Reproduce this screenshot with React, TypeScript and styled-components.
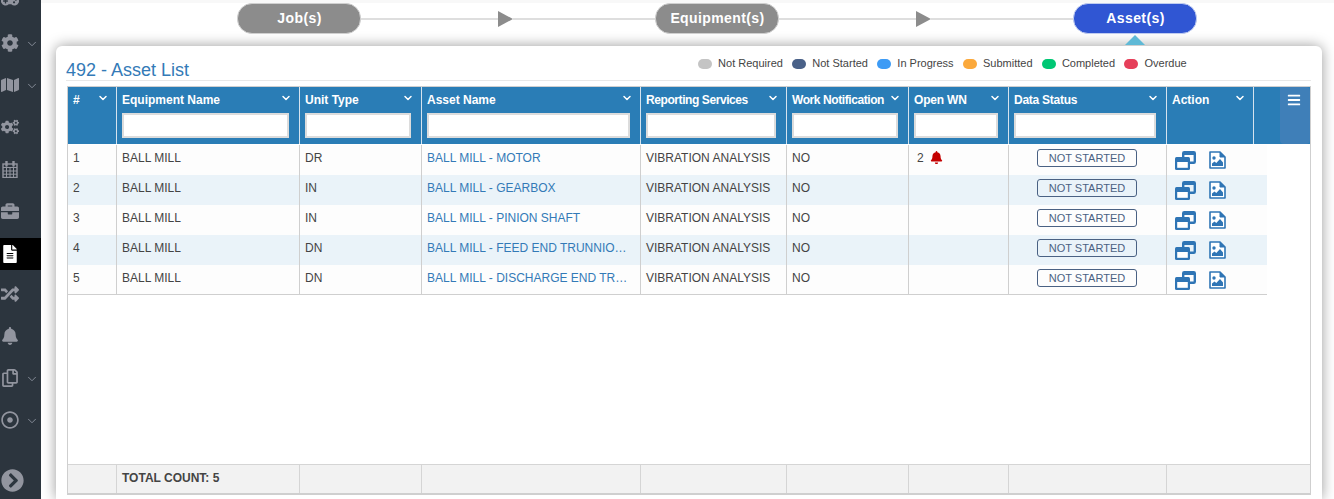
import React from 'react';
import styled, { createGlobalStyle } from 'styled-components';
import { ChevronDown } from 'lucide-react';
import {
  FaGamepad, FaCog, FaMap, FaCogs, FaBriefcase, FaFileAlt, FaRandom, FaBell,
  FaRegCopy, FaRegDotCircle, FaChevronCircleRight, FaBars,
} from 'react-icons/fa';

const Global = createGlobalStyle`
  html, body { margin: 0; padding: 0; height: 100%; overflow: hidden; background: #fff; }
  body { font-family: "Liberation Sans", Arial, sans-serif; color: #333; }
  * { box-sizing: border-box; }
`;

const COLS = '49px 183px 122px 219px 146px 122px 100px 158px';

const Page = styled.div`
  display: flex;
  width: 1334px;
  height: 499px;
  overflow: hidden;
`;

const Sidebar = styled.nav`
  width: 41px;
  flex: none;
  height: 499px;
  background: #2c353e;
  display: flex;
  flex-direction: column;
  overflow: hidden;
  color: #92959f;
`;

const NavItem = styled.div<{ $active?: boolean; $first?: boolean }>`
  flex: none;
  height: ${p => (p.$active ? 32 : 42)}px;
  margin: ${p => (p.$active ? '6px 0 3px' : p.$first ? '-20px 0 0' : '0')};
  background: ${p => (p.$active ? '#000' : 'transparent')};
  color: ${p => (p.$active ? '#fff' : 'inherit')};
  display: flex;
  align-items: center;
  padding-left: 1px;
  font-size: 18px;
`;

const NavIcon = styled.span`
  width: 18px;
  height: 18px;
  display: flex;
  align-items: center;
  justify-content: center;
`;

const NavCaret = styled(ChevronDown)`
  margin-left: 6px;
  margin-top: 2px;
  color: #8a909c;
`;

const NavFoot = styled.div`
  margin-top: auto;
  height: 30px;
  padding-left: 1px;
  font-size: 23px;
  color: #92959f;
  display: flex;
  align-items: flex-start;
`;

const Main = styled.main`
  flex: 1;
  min-width: 0;
  display: flex;
  flex-direction: column;
  background: #fff;
`;

const Stepper = styled.div`
  flex: none;
  height: 46px;
  padding: 0 0 0 196px;
  border-top: 3px solid #f8f8f8;
  display: flex;
  align-items: flex-start;
`;

const Pill = styled.div<{ $on?: boolean }>`
  position: relative;
  width: 124px;
  height: 31px;
  flex: none;
  border-radius: 15px;
  border: 1px solid ${p => (p.$on ? '#c0ccf0' : '#cfcfcf')};
  background: ${p => (p.$on ? '#3056d3' : '#8c8c8c')};
  color: #fff;
  font-size: 14px;
  font-weight: 700;
  letter-spacing: 0.4px;
  padding: 0 0 1px 1px;
  display: flex;
  align-items: center;
  justify-content: center;
`;

const Notch = styled.span`
  position: absolute;
  left: 50%;
  top: 31px;
  margin-left: -10px;
  width: 0;
  height: 0;
  border-left: 10px solid transparent;
  border-right: 10px solid transparent;
  border-bottom: 10px solid #5fb9d6;
`;

const Connector = styled.div`
  width: 294px;
  height: 31px;
  flex: none;
  display: flex;
  align-items: center;
`;

const Line = styled.span<{ $w: number }>`
  width: ${p => p.$w}px;
  height: 2px;
  background: #dedede;
  flex: none;
`;

const Arrow = styled.span`
  flex: none;
  width: 0;
  height: 0;
  border-top: 8px solid transparent;
  border-bottom: 8px solid transparent;
  border-left: 15px solid #8c8c8c;
`;

const Card = styled.section`
  width: 1266px;
  margin-left: 15px;
  flex: 1;
  background: #fff;
  border-radius: 6px 6px 0 0;
  box-shadow: 0 0 14px rgba(0, 0, 0, 0.4);
  padding: 0 11px 0 10px;
  display: flex;
  flex-direction: column;
  min-height: 0;
`;

const CardHead = styled.header`
  flex: none;
  height: 35px;
  border-bottom: 1px solid #e8e8e8;
  display: flex;
  align-items: flex-start;
  margin-bottom: 5px;
`;

const Title = styled.h2`
  margin: 14px 0 0;
  font-size: 18px;
  line-height: 20px;
  font-weight: 400;
  color: #337ab7;
  white-space: nowrap;
`;

const Legend = styled.div`
  margin: 11px 0 0 509px;
  display: flex;
  gap: 9.4px;
`;

const LegendItem = styled.span`
  display: flex;
  align-items: center;
  gap: 6px;
  font-size: 11px;
  line-height: 13px;
  color: #444;
`;

const Dot = styled.i<{ $c: string }>`
  width: 14px;
  height: 10px;
  border-radius: 5px;
  background: ${p => p.$c};
`;

const Table = styled.div`
  width: 1244px;
  margin-left: 1px;
  flex: none;
  height: 409px;
  border: 1px solid #cfcfcf;
  border-bottom: 2px solid #cfcfcf;
  display: flex;
  flex-direction: column;
`;

const HeadRow = styled.div`
  flex: none;
  height: 57px;
  background: #2a7db6;
  display: grid;
  grid-template-columns: ${COLS} 87px 1fr 30px;
`;

const HeadCell = styled.div`
  position: relative;
  border-right: 1px solid #d5e3ee;
  padding: 6px 5px 0 5px;
  color: #fff;
  font-size: 12px;
  font-weight: 700;
  line-height: 14px;
`;

const HeadLabel = styled.span<{ $track: number }>`
  letter-spacing: ${p => p.$track}px;
  white-space: nowrap;
`;

const Sort = styled(ChevronDown)`
  position: absolute;
  right: 7px;
  top: 5px;
  color: #fff;
`;

const Filter = styled.input`
  display: block;
  width: calc(100% - 5px);
  height: 25px;
  margin-top: 6px;
  background: #fff;
  border: 2px solid #dcdcdc;
  outline: none;
`;

const Spacer = styled.div``;

const MenuCell = styled.div`
  background: #3f7fb8;
  border-radius: 0 4px 4px 4px;
  color: #fff;
  display: flex;
  justify-content: center;
  padding: 6px 2px 0 0;
  font-size: 14px;
`;

const Body = styled.div`
  flex: 1;
  min-height: 0;
  padding-top: 1px;
  background: #fff;
`;

const Rows = styled.div`
  width: 1199px;
  height: 150px;
  overflow: hidden;
  border-bottom: 1px solid #cfcfcf;
`;

const Row = styled.div<{ $alt?: boolean }>`
  display: grid;
  grid-template-columns: ${COLS} 1fr;
  height: 30px;
  background: ${p => (p.$alt ? '#eaf3f9' : '#fdfdfd')};
`;

const Cell = styled.div<{ $center?: boolean; $inset?: number }>`
  border-right: 1px solid #cfcfcf;
  padding: 0 5px 0 ${p => p.$inset ?? 5}px;
  font-size: 12px;
  color: #444;
  line-height: 26px;
  white-space: nowrap;
  overflow: hidden;
  text-overflow: ellipsis;
  ${p => p.$center && 'display:flex;justify-content:center;align-items:flex-start;padding:4px 6px 0 5px;'}
`;

const AssetLink = styled(Cell).attrs({ as: 'a' })`
  color: #337ab7;
  text-decoration: none;
  display: block;
`;

const Alert = styled(FaBell)`
  color: #c40000;
  font-size: 13px;
  margin-left: 6px;
  vertical-align: -2px;
`;

const Status = styled.span`
  width: 100px;
  height: 18px;
  border: 1px solid #4a6183;
  border-radius: 3px;
  color: #4a6183;
  font-size: 11px;
  line-height: 16px;
  text-align: center;
`;

const Actions = styled.div`
  display: flex;
  align-items: flex-start;
  padding: 6px 0 0 8px;
  gap: 13px;
  color: #2f75b5;
`;

const Foot = styled.div`
  flex: none;
  height: 29px;
  background: #f2f2f2;
  border-top: 1px solid #d5d5d5;
  display: grid;
  grid-template-columns: ${COLS} 1fr;
`;

const FootCell = styled.div`
  border-right: 1px solid #d5d5d5;
  padding: 0 5px;
  font-size: 12px;
  font-weight: 700;
  color: #444;
  line-height: 27px;
  &:last-child { border-right: 0; }
`;

const CloneIcon = () => (
  <svg width="21" height="19" viewBox="0 0 21 19" fill="none">
    <rect x="8.2" y="1.2" width="11.6" height="10.6" rx="1" stroke="currentColor" strokeWidth="2.4" />
    <path d="M8 3h12" stroke="currentColor" strokeWidth="2" />
    <rect x="0" y="6" width="15" height="13" rx="1.5" fill="currentColor" />
    <rect x="2.2" y="11" width="10.6" height="5.8" fill="#fff" />
  </svg>
);

const PictureIcon = () => (
  <svg width="17" height="18" viewBox="0 0 17 18" fill="none">
    <path d="M1 1h10l5 5v11H1z" stroke="currentColor" strokeWidth="1.6" strokeLinejoin="round" fill="#fff" />
    <path d="M11 1v5h5" fill="currentColor" stroke="currentColor" strokeWidth="1" />
    <circle cx="5" cy="7" r="1.7" fill="currentColor" />
    <path d="M3 15v-2.5l2.5-2 1.8 1.5L11 8l3 3.5V15z" fill="currentColor" />
  </svg>
);

const CalendarIcon = () => (
  <svg width="16" height="17" viewBox="0 0 16 17" fill="none" stroke="currentColor" strokeWidth="1">
    <rect x="1" y="3" width="14" height="13.5" strokeWidth="1.4" />
    <path d="M1 6.5h14M1 10h14M1 13.2h14M4.5 6v10M8 6v10M11.5 6v10" />
    <path d="M4.5 0.5v4M11.5 0.5v4" strokeWidth="2.4" strokeLinecap="round" />
  </svg>
);

const headers: [string, number][] = [
  ['#', 0], ['Equipment Name', 0], ['Unit Type', 0], ['Asset Name', 0],
  ['Reporting Services', -0.42], ['Work Notification', -0.42], ['Open WN', -0.2], ['Data Status', -0.25],
];
const legend: [string, string][] = [
  ['Not Required', '#c4c4c4'], ['Not Started', '#4a6188'], ['In Progress', '#3d9bf5'],
  ['Submitted', '#fba93c'], ['Completed', '#00c774'], ['Overdue', '#e63f5a'],
];
const rows = [
  ['DR', 'BALL MILL - MOTOR'],
  ['IN', 'BALL MILL - GEARBOX'],
  ['IN', 'BALL MILL - PINION SHAFT'],
  ['DN', 'BALL MILL - FEED END TRUNNION BEARING'],
  ['DN', 'BALL MILL - DISCHARGE END TRUNNION BEARING'],
];
const nav: [React.ReactNode, boolean][] = [
  [<FaGamepad key="a" />, false], [<FaCog key="b" />, true], [<FaMap key="c" />, true],
  [<FaCogs key="d" />, false], [<CalendarIcon key="e" />, false], [<FaBriefcase key="f" />, false],
];
const navAfter: [React.ReactNode, boolean][] = [
  [<FaRandom key="g" />, false], [<FaBell key="h" />, false], [<FaRegCopy key="i" />, true], [<FaRegDotCircle key="j" />, true],
];

const NavEntry = ({ icon, caret, first }: { icon: React.ReactNode; caret: boolean; first?: boolean }) => (
  <NavItem $first={first}>
    <NavIcon>{icon}</NavIcon>
    {caret && <NavCaret size={14} strokeWidth={1.6} />}
  </NavItem>
);

export default function App() {
  return (
    <Page>
      <Global />
      <Sidebar>
        {nav.map(([icon, caret], i) => <NavEntry key={i} icon={icon} caret={caret} first={i === 0} />)}
        <NavItem $active><NavIcon><FaFileAlt /></NavIcon></NavItem>
        {navAfter.map(([icon, caret], i) => <NavEntry key={i} icon={icon} caret={caret} />)}
        <NavFoot><FaChevronCircleRight /></NavFoot>
      </Sidebar>
      <Main>
        <Stepper>
          <Pill>Job(s)</Pill>
          <Connector><Line $w={137} /><Arrow /><Line $w={142} /></Connector>
          <Pill>Equipment(s)</Pill>
          <Connector><Line $w={137} /><Arrow /><Line $w={142} /></Connector>
          <Pill $on>Asset(s)<Notch /></Pill>
        </Stepper>
        <Card>
          <CardHead>
            <Title>492 - Asset List</Title>
            <Legend>
              {legend.map(([t, c]) => <LegendItem key={t}><Dot $c={c} />{t}</LegendItem>)}
            </Legend>
          </CardHead>
          <Table>
            <HeadRow>
              {headers.map(([h, track], i) => (
                <HeadCell key={h}>
                  <HeadLabel $track={track}>{h}</HeadLabel>
                  <Sort size={12} strokeWidth={3} />
                  {i > 0 && <Filter aria-label={h} />}
                </HeadCell>
              ))}
              <HeadCell>Action<Sort size={12} strokeWidth={3} /></HeadCell>
              <Spacer />
              <MenuCell><FaBars /></MenuCell>
            </HeadRow>
            <Body>
              <Rows>
                {rows.map(([unit, asset], i) => (
                  <Row key={asset} $alt={i % 2 === 1}>
                    <Cell>{i + 1}</Cell>
                    <Cell>BALL MILL</Cell>
                    <Cell>{unit}</Cell>
                    <AssetLink>{asset}</AssetLink>
                    <Cell>VIBRATION ANALYSIS</Cell>
                    <Cell>NO</Cell>
                    <Cell $inset={8}>{i === 0 && <>2<Alert /></>}</Cell>
                    <Cell $center><Status>NOT STARTED</Status></Cell>
                    <Actions><CloneIcon /><PictureIcon /></Actions>
                  </Row>
                ))}
              </Rows>
            </Body>
            <Foot>
              <FootCell />
              <FootCell>TOTAL COUNT: 5</FootCell>
              <FootCell /><FootCell /><FootCell /><FootCell /><FootCell /><FootCell /><FootCell />
            </Foot>
          </Table>
        </Card>
      </Main>
    </Page>
  );
}
